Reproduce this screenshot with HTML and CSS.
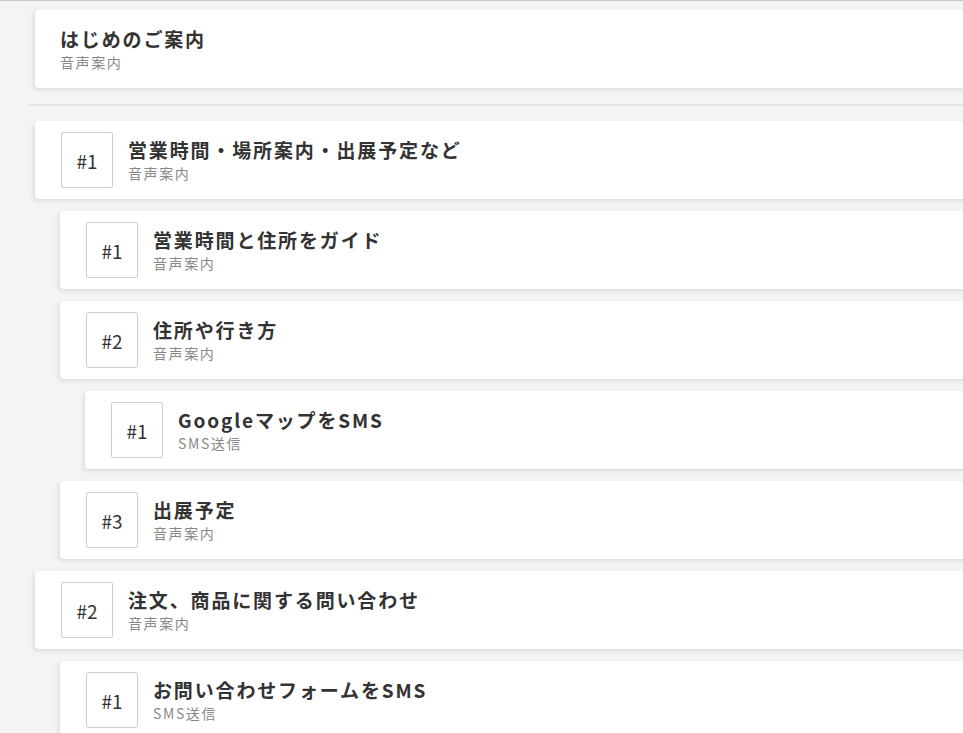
FILE: index.html
```html
<!DOCTYPE html>
<html lang="ja">
<head>
    <meta charset="UTF-8">
    <meta name="viewport" content="width=device-width, initial-scale=1.0">
    <title>音声ガイド</title>
    <link rel="stylesheet" href="styles.css">
</head>
<body>
    <div class="topline"></div>
    <div class="flow">
        <div class="card intro">
            <div class="text">
                <div class="title">はじめのご案内</div>
                <div class="sub">音声案内</div>
            </div>
        </div>

        <hr class="divider">

        <div class="node">
            <div class="card">
                <div class="num">#1</div>
                <div class="text">
                    <div class="title">営業時間・場所案内・出展予定など</div>
                    <div class="sub">音声案内</div>
                </div>
            </div>
            <div class="children">
                <div class="node">
                    <div class="card">
                        <div class="num">#1</div>
                        <div class="text">
                            <div class="title">営業時間と住所をガイド</div>
                            <div class="sub">音声案内</div>
                        </div>
                    </div>
                </div>
                <div class="node">
                    <div class="card">
                        <div class="num">#2</div>
                        <div class="text">
                            <div class="title">住所や行き方</div>
                            <div class="sub">音声案内</div>
                        </div>
                    </div>
                    <div class="children">
                        <div class="node">
                            <div class="card">
                                <div class="num">#1</div>
                                <div class="text">
                                    <div class="title">GoogleマップをSMS</div>
                                    <div class="sub">SMS送信</div>
                                </div>
                            </div>
                        </div>
                    </div>
                </div>
                <div class="node">
                    <div class="card">
                        <div class="num">#3</div>
                        <div class="text">
                            <div class="title">出展予定</div>
                            <div class="sub">音声案内</div>
                        </div>
                    </div>
                </div>
            </div>
        </div>

        <div class="node">
            <div class="card">
                <div class="num">#2</div>
                <div class="text">
                    <div class="title">注文、商品に関する問い合わせ</div>
                    <div class="sub">音声案内</div>
                </div>
            </div>
            <div class="children">
                <div class="node">
                    <div class="card">
                        <div class="num">#1</div>
                        <div class="text">
                            <div class="title">お問い合わせフォームをSMS</div>
                            <div class="sub">SMS送信</div>
                        </div>
                    </div>
                </div>
            </div>
        </div>
    </div>
</body>
</html>
```

FILE: styles.css
```css
html, body {
    margin: 0;
    padding: 0;
    background-color: #f4f4f4;
    overflow: hidden;
    font-family: "Noto Sans CJK JP", "Noto Sans", sans-serif;
    color: #333;
}

.topline {
    height: 1px;
    background-color: #c8c8c8;
}

.flow {
    display: flex;
    flex-direction: column;
    gap: 12px;
    padding: 9px 0 0 35px;
    margin-right: -60px;
}

.node,
.children {
    display: flex;
    flex-direction: column;
    gap: 12px;
}

.children {
    padding-left: 25px;
}

.card {
    display: flex;
    align-items: center;
    gap: 15px;
    height: 78px;
    box-sizing: border-box;
    padding: 0 26px;
    background-color: #fff;
    border-radius: 4px;
    box-shadow: -2px 2px 4px rgba(0, 0, 0, 0.09);
}

.intro {
    padding-left: 25px;
}

.divider {
    border: none;
    height: 2px;
    background-color: #e2e2e2;
    margin: 4px 0 3px -6px;
}

.num {
    width: 52px;
    height: 56px;
    box-sizing: border-box;
    border: 1px solid #cfcfcf;
    border-radius: 2px;
    display: flex;
    align-items: center;
    justify-content: center;
    font-size: 19px;
    color: #333;
}

.text {
    display: flex;
    flex-direction: column;
}

.title {
    font-size: 19px;
    font-weight: bold;
    line-height: 26px;
    letter-spacing: 1.85px;
    color: #333;
}

.sub {
    font-size: 14px;
    line-height: 20px;
    letter-spacing: 1.6px;
    color: #888;
}
```
